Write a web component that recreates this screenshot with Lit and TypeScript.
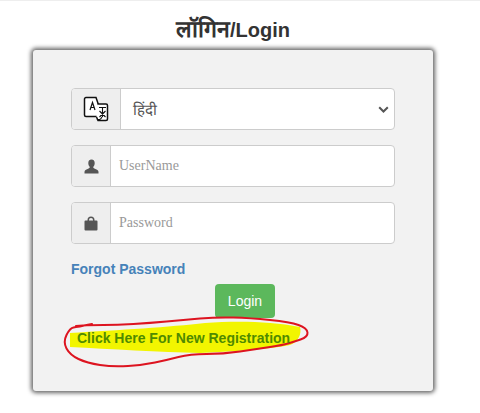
import { LitElement, html, css, svg } from "lit";
import { customElement } from "lit/decorators.js";

const OUTLINE: [number, number][] = [
  [92, 324], [77, 327], [70, 328], [63, 342], [70, 355], [87, 363], [113, 367], [143, 365], [167, 360],
  [190, 354], [223, 354], [257, 349], [283, 345], [293, 342], [308, 337], [307, 328], [290, 322],
  [250, 318], [217, 317], [183, 320], [150, 323], [117, 325], [90, 325], [76, 326],
];

function smooth(points: [number, number][]): string {
  let d = `M${points[0][0]} ${points[0][1]}`;
  for (let i = 1; i < points.length - 1; i++) {
    const [x, y] = points[i];
    const [nx, ny] = points[i + 1];
    d += ` Q${x} ${y} ${(x + nx) / 2} ${(y + ny) / 2}`;
  }
  const last = points[points.length - 1];
  return `${d} L${last[0]} ${last[1]}`;
}

@customElement("app-root")
export class AppRoot extends LitElement {
  static styles = css`
    :host { display: block; width: 480px; height: 413px; overflow: hidden; background: #fff; font-family: "Liberation Sans", Arial, sans-serif; color: #333; box-sizing: border-box; border-top: 1px solid #eee; }
    * { box-sizing: border-box; }
    .wrap { width: 400px; margin-left: 33px; }
    h1 { margin: 0; height: 49px; padding-top: 16px; font-size: 20px; line-height: 24px; font-weight: 700; text-align: center; color: #333; }
    .hi { font-size: 23px; }
    .card { position: relative; height: 341px; padding: 38px 38px 0 38px; background: #f2f2f2; border-radius: 3px; box-shadow: 0 0 4px 2px #666; }
    .group { display: flex; height: 42px; margin-bottom: 15px; border: 1px solid #ccc; border-radius: 4px; background: #fff; overflow: hidden; }
    .addon { flex: none; width: 39px; display: flex; align-items: center; justify-content: center; background: #eee; border-right: 1px solid #ccc; color: #555; }
    .addon.lang { width: 49px; }
    .select { flex: 1; display: flex; align-items: center; justify-content: space-between; padding: 0 5px 0 12px; font-size: 15px; color: #555; }
    .field { flex: 1; display: flex; align-items: center; padding-left: 8px; font-family: "Liberation Serif", serif; font-size: 14px; color: #999; }
    .forgot { display: block; margin-top: 17px; font-size: 14px; line-height: 16px; font-weight: 700; color: #4682b9; }
    .btn-row { display: flex; margin-top: 7px; padding-left: 144px; }
    .btn { width: 60px; height: 34px; display: flex; align-items: center; justify-content: center; background: #5cb85c; border-radius: 4px; color: #fff; font-size: 14px; }
    .reg { position: relative; z-index: 1; margin-top: 12px; margin-left: 6px; font-size: 14px; line-height: 16px; font-weight: 700; color: #4f8a00; }
    .ink { position: absolute; left: -33px; top: -50px; width: 480px; height: 413px; pointer-events: none; }
  `;

  render() {
    return html`
      <div class="wrap">
        <h1><span class="hi">लॉगिन</span>/Login</h1>
        <div class="card">
          <svg class="ink" viewBox="0 0 480 413">
            ${svg`<path d="M70 333 C120 330 170 327 205 323 C235 321 270 321 300 327 C302 334 298 342 290 345 C270 349 240 351 200 353 C160 352 110 349 70 347 Z" fill="#f2f500"/>
            <path d=${smooth(OUTLINE)} fill="none" stroke="#dd1420" stroke-width="2" stroke-linejoin="round" stroke-linecap="round"/>`}
          </svg>
          <div class="group">
            <div class="addon lang">
              <svg width="26" height="26" viewBox="0 0 26 26" fill="none" stroke="#111" stroke-width="1.5">
                <path d="M3 1.5 H13 L19.5 20.5 H3 A1.5 1.5 0 0 1 1.5 19 V3 A1.5 1.5 0 0 1 3 1.5 Z" fill="#fff"/>
                <path d="M14.5 8 H23 A1.5 1.5 0 0 1 24.5 9.5 V23 A1.5 1.5 0 0 1 23 24.5 H15 L13.5 21" fill="#fff"/>
                <path d="M7 14 L9.5 6.5 L12 14 M8 11.5 H11" stroke-width="1.2"/>
                <path d="M16 11.5 H23 M19.5 11.5 V21 M16.5 15 L22.5 21 M22.5 15 L16.5 21 M14 23 Q17 25 19 21" stroke-width="1.1"/>
              </svg>
            </div>
            <div class="select">
              <span>हिंदी</span>
              <svg width="11" height="7" viewBox="0 0 11 7" fill="none" stroke="#555" stroke-width="2"><path d="M1.2 1.2 L5.5 5.5 L9.8 1.2"/></svg>
            </div>
          </div>
          <div class="group">
            <div class="addon">
              <svg width="15" height="15" viewBox="0 0 15 15" fill="#555"><path d="M7.5 0.5 C5.3 0.5 4.2 2.2 4.3 4.2 C4.4 6 5 7.2 5.8 8 C5.8 9.2 4.6 9.6 3 10.2 C1.6 10.8 0.5 11.3 0.5 13 V14.5 H14.5 V13 C14.5 11.3 13.4 10.8 12 10.2 C10.4 9.6 9.2 9.2 9.2 8 C10 7.2 10.6 6 10.7 4.2 C10.8 2.2 9.7 0.5 7.5 0.5 Z"/></svg>
            </div>
            <div class="field">UserName</div>
          </div>
          <div class="group">
            <div class="addon">
              <svg width="14" height="15" viewBox="0 0 14 15" fill="#555"><path d="M3.5 5 V4 A3.5 3.5 0 0 1 10.5 4 V5 H9 V4 A2 2 0 0 0 5 4 V5 Z M1.5 4.5 H12.5 A1 1 0 0 1 13.5 5.5 V13.5 A1 1 0 0 1 12.5 14.5 H1.5 A1 1 0 0 1 0.5 13.5 V5.5 A1 1 0 0 1 1.5 4.5 Z"/></svg>
            </div>
            <div class="field">Password</div>
          </div>
          <a class="forgot">Forgot Password</a>
          <div class="btn-row"><div class="btn">Login</div></div>
          <div class="reg">Click Here For New Registration</div>
        </div>
      </div>
    `;
  }
}
